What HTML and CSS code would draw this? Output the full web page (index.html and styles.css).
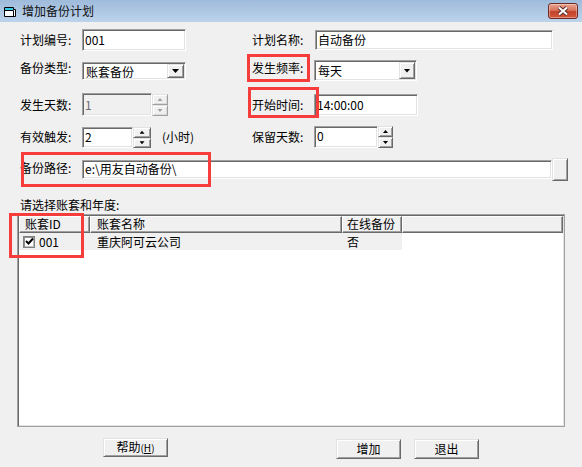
FILE: index.html
```html
<!DOCTYPE html>
<html lang="zh-CN">
<head>
<meta charset="utf-8">
<title>增加备份计划</title>
<link rel="stylesheet" href="styles.css">
</head>
<body>
<div class="window">
  <header class="titlebar">
    <svg class="app-icon" width="14" height="12" viewBox="0 0 14 12">
      <path d="M1.5 1.5h9v2h2v7h-11z" fill="#fff" stroke="#000"/>
      <path d="M2 2h8v2H2z" fill="#35c8e8"/>
      <path d="M1.5 4.5h9" stroke="#000"/>
      <path d="M10.5 4.5v6" stroke="#000"/>
    </svg>
    <span class="title">增加备份计划</span>
    <button class="close-btn" aria-label="关闭">
      <svg width="14" height="10" viewBox="0 0 14 10">
        <path d="M3 1.5l8 7M11 1.5l-8 7" stroke="#5a2f2a" stroke-width="4"/>
        <path d="M3 1.5l8 7M11 1.5l-8 7" stroke="#fff" stroke-width="2"/>
      </svg>
    </button>
  </header>

  <main class="form">
    <div class="row row-1">
      <span class="lbl lh22">计划编号:</span>
      <div class="ctl"><div class="field f-code">001</div></div>
      <span class="lbl lh22">计划名称:</span>
      <div class="ctl"><div class="field f-name">自动备份</div></div>
    </div>

    <div class="row row-2">
      <span class="lbl lh16">备份类型:</span>
      <div class="ctl"><div class="combo c-type"><span class="combo-text">账套备份</span><span class="drop-btn"><i class="tri-down"></i></span></div></div>
      <span class="lbl lh16">发生频率:</span>
      <div class="ctl"><div class="combo c-freq"><span class="combo-text">每天</span><span class="drop-btn"><i class="tri-down"></i></span></div></div>
    </div>

    <div class="row row-3">
      <span class="lbl lh23">发生天数:</span>
      <div class="ctl">
        <div class="field f-days disabled">1</div>
        <div class="spin s-days disabled"><span class="spin-btn"><i class="tri-up-s"></i></span><span class="spin-btn"><i class="tri-down-s"></i></span></div>
      </div>
      <span class="lbl lh23">开始时间:</span>
      <div class="ctl"><div class="field f-time">14:00:00</div></div>
    </div>

    <div class="row row-4">
      <span class="lbl lh22">有效触发:</span>
      <div class="ctl">
        <div class="field f-trig">2</div>
        <div class="spin s-trig"><span class="spin-btn"><i class="tri-up-s"></i></span><span class="spin-btn"><i class="tri-down-s"></i></span></div>
        <span class="unit">(小时)</span>
      </div>
      <span class="lbl lh22">保留天数:</span>
      <div class="ctl">
        <div class="field f-keep">0</div>
        <div class="spin s-keep"><span class="spin-btn"><i class="tri-up-s"></i></span><span class="spin-btn"><i class="tri-down-s"></i></span></div>
      </div>
    </div>

    <div class="path-row">
      <span class="lbl lh20">备份路径:</span>
      <div class="field f-path">e:\用友自动备份\</div>
      <button class="browse-btn" aria-label="浏览"></button>
    </div>

    <div class="caption">请选择账套和年度:</div>

    <div class="listview">
      <div class="lv-head">
        <span class="hcell col-id">账套ID</span>
        <span class="hcell col-name">账套名称</span>
        <span class="hcell col-online">在线备份</span>
        <span class="hcell col-rest"></span>
      </div>
      <div class="lv-row">
        <span class="cell col-id"><span class="checkbox"><svg width="9" height="9" viewBox="0 0 9 9"><path d="M1 4l2.5 2.5L8 1.5" fill="none" stroke="#000" stroke-width="2"/></svg></span>001</span>
        <span class="cell col-name">重庆阿可云公司</span>
        <span class="cell col-online">否</span>
      </div>
    </div>

    <div class="actions">
      <button class="btn btn-help">帮助<span class="hk">(<u>H</u>)</span></button>
      <button class="btn btn-add">增加</button>
      <button class="btn btn-exit">退出</button>
    </div>
  </main>

  <div class="mark mark-freq"></div>
  <div class="mark mark-time"></div>
  <div class="mark mark-path"></div>
  <div class="mark mark-id"></div>
</div>
</body>
</html>
```

FILE: styles.css
```css
* { box-sizing: border-box; margin: 0; padding: 0; }
html, body { width: 582px; height: 467px; overflow: hidden; }
body {
  background: #f0f0f0;
  font-family: "Noto Sans CJK SC", "Noto Sans", sans-serif;
  font-size: 12px;
  color: #000;
}
.window { position: relative; width: 582px; height: 467px; background: #f0f0f0; }

/* title bar */
.titlebar {
  height: 22px;
  display: flex;
  align-items: center;
  padding-left: 3px;
  background: linear-gradient(#9fbbdb, #bcd3eb);
}
.app-icon { display: block; margin-top: 1px; }
.title { margin-left: 5px; line-height: 14px; color: #111; }
.close-btn {
  margin-left: auto;
  margin-right: 4px;
  width: 30px;
  height: 16px;
  border: 1px solid #6b2a22;
  border-radius: 3px;
  background: linear-gradient(#e9a38f 0%, #d8745c 45%, #c4412a 55%, #d35a3c 100%);
  box-shadow: inset 0 0 0 1px rgba(255,255,255,.35);
  display: flex;
  align-items: center;
  justify-content: center;
}
.close-btn svg { display: block; }

/* form */
.form { padding-top: 7px; }
.row {
  display: grid;
  grid-template-columns: 62px 170px 62px 1fr;
  margin-left: 20px;
  align-items: start;
}
.row-1 { height: 31px; }
.row-2 { height: 33px; }
.row-3 { height: 33px; }
.row-4 { height: 32px; }
.ctl { display: flex; align-items: flex-start; }

.lbl { white-space: nowrap; }
.lh16 { line-height: 16px; }
.lh20 { line-height: 20px; }
.lh22 { line-height: 22px; }
.lh23 { line-height: 23px; }

.field {
  background: #fff;
  border: 1px solid;
  border-color: #a0a0a0 #fff #fff #a0a0a0;
  box-shadow: inset 1px 1px #696969, inset -1px -1px #e3e3e3;
  padding: 0 0 1px 2px;
  display: flex;
  align-items: center;
  white-space: nowrap;
  overflow: hidden;
}
.field.disabled { background: #f0f0f0; color: #6d6d6d; }
.f-code { width: 104px; height: 22px; }
.f-name { width: 238px; height: 20px; margin: 1px 0 0 1px; }
.f-days { width: 70px; height: 23px; }
.f-time { width: 104px; height: 22px; margin-top: 1px; }
.f-trig { width: 51px; height: 21px; margin-top: 1px; padding-bottom: 3px; }
.f-keep { width: 64px; height: 22px; padding-bottom: 3px; }

/* combo */
.combo {
  display: flex;
  background: #fff;
  border: 1px solid;
  border-color: #a0a0a0 #fff #fff #a0a0a0;
  box-shadow: inset 1px 1px #696969, inset -1px -1px #e3e3e3;
  padding: 1px;
}
.c-type { width: 104px; height: 18px; margin-top: 2px; }
.c-freq { width: 103px; height: 21px; }
.combo-text { flex: 1; padding-left: 2px; display: flex; align-items: center; white-space: nowrap; }
.c-type .combo-text { padding-top: 1px; }
.drop-btn {
  width: 17px;
  background: #f0f0f0;
  border: 1px solid;
  border-color: #e3e3e3 #696969 #696969 #e3e3e3;
  box-shadow: inset 1px 1px #fff, inset -1px -1px #a0a0a0;
  display: flex;
  align-items: center;
  justify-content: center;
}
.c-freq .drop-btn { width: 16px; }
.tri-down {
  display: block;
  width: 7px;
  height: 4px;
  background: #000;
  clip-path: polygon(0 0, 100% 0, 50% 100%);
}

/* spin */
.spin { display: flex; flex-direction: column; }
.s-days { width: 16px; height: 22px; margin-top: 1px; }
.s-trig { width: 18px; height: 21px; margin-top: 1px; }
.s-keep { width: 15px; height: 22px; }
.spin-btn {
  flex: 1;
  background: #f0f0f0;
  border: 1px solid;
  border-color: #e3e3e3 #696969 #696969 #e3e3e3;
  box-shadow: inset 1px 1px #fff, inset -1px -1px #a0a0a0;
  display: flex;
  align-items: center;
  justify-content: center;
}
.spin.disabled .spin-btn {
  border-color: #e3e3e3 #a0a0a0 #a0a0a0 #e3e3e3;
  box-shadow: inset 1px 1px #fff, inset -1px -1px #dadada;
}
.tri-up-s, .tri-down-s {
  display: block;
  width: 5px;
  height: 3px;
  background: #000;
}
.tri-up-s { clip-path: polygon(50% 0, 100% 100%, 0 100%); }
.tri-down-s { clip-path: polygon(0 0, 100% 0, 50% 100%); }
.spin.disabled .tri-up-s, .spin.disabled .tri-down-s { background: #a0a0a0; }
.unit { margin-left: 11px; line-height: 22px; white-space: nowrap; }

/* path row */
.path-row { display: flex; align-items: flex-start; margin-left: 20px; height: 23px; }
.path-row .lbl { width: 62px; }
.f-path { width: 470px; height: 19px; margin-top: 2px; padding-bottom: 2px; }
.browse-btn {
  width: 16px;
  height: 23px;
  background: #f0f0f0;
  border: 1px solid;
  border-color: #e3e3e3 #696969 #696969 #e3e3e3;
  box-shadow: inset 1px 1px #fff, inset -1px -1px #a0a0a0;
}

.caption { margin: 16px 0 0 20px; line-height: 16px; }

/* list view */
.listview {
  margin: 1px 0 0 17px;
  width: 548px;
  height: 213px;
  background: #fff;
  border: 1px solid;
  border-color: #a0a0a0 #a0a0a0 #a0a0a0 #a0a0a0;
  box-shadow: inset 1px 1px #696969, inset -1px -1px #e3e3e3;
  padding: 1px;
}
.lv-head { display: flex; height: 17px; }
.hcell {
  background: #f0f0f0;
  border: 1px solid;
  border-color: #fff #696969 #696969 #fff;
  box-shadow: inset -1px -1px #a0a0a0;
  padding-left: 5px;
  line-height: 14px;
  white-space: nowrap;
}
.col-id { width: 71px; }
.col-name { width: 252px; }
.col-online { width: 60px; }
.col-rest { flex: 1; }
.hcell.col-name { padding-left: 6px; }
.hcell.col-online { padding-left: 4px; }
.lv-row { display: flex; height: 17px; }
.cell {
  background: #f0f0f0;
  display: flex;
  align-items: center;
  white-space: nowrap;
}
.cell.col-id { padding-left: 4px; }
.cell.col-name { padding-left: 7px; }
.cell.col-online { padding-left: 5px; }
.checkbox {
  width: 12px;
  height: 12px;
  margin-right: 4px;
  background: #fff;
  border: 1px solid;
  border-color: #808080 #808080 #808080 #808080;
  box-shadow: inset 1px 1px #909090, inset -1px -1px #c0c0c0;
  display: flex;
  align-items: center;
  justify-content: center;
}
.checkbox svg { display: block; }

/* buttons */
.actions { display: flex; align-items: flex-start; margin-top: 11px; }
.btn {
  width: 65px;
  height: 20px;
  background: #f0f0f0;
  border: 1px solid;
  border-color: #e3e3e3 #696969 #696969 #e3e3e3;
  box-shadow: inset 1px 1px #fff, inset -1px -1px #a0a0a0;
  font-family: inherit;
  font-size: 12px;
  color: #000;
  line-height: 16px;
}
.btn-help { margin-left: 103px; height: 19px; }
.btn-add { margin-left: 168px; margin-top: 1px; }
.btn-exit { margin-left: 13px; margin-top: 1px; }
.hk { font-size: 10px; }

/* red annotation frames */
.mark { position: absolute; border: 3px solid #f73c3c; }
.mark-freq { left: 247px; top: 54px; width: 63px; height: 28px; }
.mark-time { left: 248px; top: 87px; width: 71px; height: 31px; }
.mark-path { left: 21px; top: 152px; width: 190px; height: 35px; }
.mark-id { left: 9px; top: 213px; width: 75px; height: 45px; }
```
